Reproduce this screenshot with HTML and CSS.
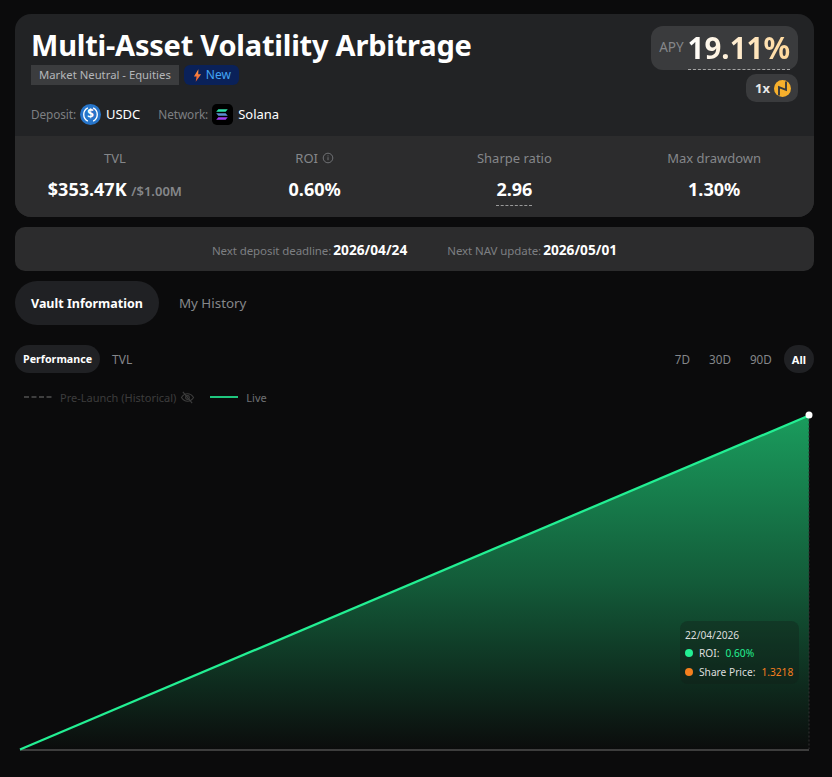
FILE: index.html
```html
<!DOCTYPE html>
<html lang="en">
<head>
<meta charset="utf-8">
<title>Multi-Asset Volatility Arbitrage</title>
<link rel="stylesheet" href="styles.css">
</head>
<body>
<main class="page">
  <section class="card">
    <header class="head">
      <div class="head-left">
        <h1 class="title">Multi-Asset Volatility Arbitrage</h1>
        <div class="tags">
          <span class="tag">Market Neutral - Equities</span>
          <span class="tag-new">
            <svg class="bolt" viewBox="0 0 10 14"><defs><linearGradient id="b" x1="0" y1="0" x2="0" y2="1"><stop offset="0" stop-color="#ff9a4a"/><stop offset="1" stop-color="#f0562a"/></linearGradient></defs><path d="M6 0 1 8h3l-1 6 6-8.500H5.800z" fill="url(#b)"/></svg>
            New
          </span>
        </div>
        <div class="assets">
          <span class="muted">Deposit:</span>
          <svg class="coin" viewBox="0 0 20 20"><circle cx="10" cy="10" r="10" fill="#2775ca"/><path d="M7.500 3.700a7 7 0 0 0 0 12.600M12.500 3.700a7 7 0 0 1 0 12.600" fill="none" stroke="#fff" stroke-width="1.300"/><text x="10" y="13.600" class="coin-text">$</text></svg>
          <span class="asset">USDC</span>
          <span class="muted net">Network:</span>
          <svg class="coin" viewBox="0 0 20 20"><rect width="20" height="20" rx="4.500" fill="#000"/><path d="M6 5h9l-2 2.300H4z" fill="#2fe0a8"/><path d="M4 8.800h9l2 2.300H6z" fill="#5a8fd0"/><path d="M6 12.700h9l-2 2.300H4z" fill="#a040f0"/></svg>
          <span class="asset">Solana</span>
        </div>
      </div>
      <div class="head-right">
        <div class="apy"><span class="apy-label">APY</span><span class="apy-value">19.11%</span></div>
        <div class="lev">1x
          <svg class="lev-icon" viewBox="0 0 16 16"><circle cx="8" cy="8" r="8" fill="#f7b02c"/><path d="M4.700 14.500V6.800L11.300 9.200V1.500" fill="none" stroke="#3a3b3d" stroke-width="1.800"/></svg>
        </div>
      </div>
    </header>
    <div class="stats">
      <div class="stat"><div class="stat-label">TVL</div><div class="stat-value">$353.47K <small class="stat-sub">/$1.00M</small></div></div>
      <div class="stat"><div class="stat-label">ROI <svg class="info" viewBox="0 0 12 12"><circle cx="6" cy="6" r="4.800" fill="none" stroke="currentColor"/><path d="M6 5.200v3M6 3.400v1" stroke="currentColor"/></svg></div><div class="stat-value">0.60%</div></div>
      <div class="stat"><div class="stat-label">Sharpe ratio</div><div class="stat-value"><span class="dashed">2.96</span></div></div>
      <div class="stat"><div class="stat-label">Max drawdown</div><div class="stat-value">1.30%</div></div>
    </div>
  </section>

  <section class="notice">
    <span class="notice-item"><span class="muted">Next deposit deadline:</span> <b>2026/04/24</b></span>
    <span class="notice-item"><span class="muted">Next NAV update:</span> <b>2026/05/01</b></span>
  </section>

  <nav class="tabs">
    <span class="tab active">Vault Information</span>
    <span class="tab">My History</span>
  </nav>

  <div class="controls">
    <div class="seg">
      <span class="seg-item on">Performance</span>
      <span class="seg-item">TVL</span>
    </div>
    <div class="seg ranges">
      <span class="range">7D</span>
      <span class="range">30D</span>
      <span class="range">90D</span>
      <span class="range on">All</span>
    </div>
  </div>

  <div class="legend">
    <span class="legend-item off"><svg class="key" viewBox="0 0 28 2"><path d="M0 1h28" stroke="#3f3f3f" stroke-width="2" stroke-dasharray="5 2.500"/></svg>Pre-Launch (Historical)
      <svg class="eye" viewBox="0 0 16 14"><path d="M1.500 7S4 3 8 3s6.500 4 6.500 4-2.500 4-6.500 4-6.500-4-6.500-4z" fill="none" stroke="#3d3d3d" stroke-width="1.200"/><circle cx="8" cy="7" r="2" fill="none" stroke="#3d3d3d" stroke-width="1.200"/><path d="M3 1l10 12" stroke="#3d3d3d" stroke-width="1.200"/></svg>
    </span>
    <span class="legend-item live"><svg class="key" viewBox="0 0 28 2"><path d="M0 1h28" stroke="#1fc67e" stroke-width="2"/></svg>Live</span>
  </div>

  <div class="chart">
    <svg class="plot" viewBox="0 0 832 371" width="832" height="371">
      <defs>
        <linearGradient id="fill" x1="0" y1="0" x2="0" y2="1">
          <stop offset="0" stop-color="#1a9c5d"/>
          <stop offset="0.5" stop-color="#135b39"/>
          <stop offset="1" stop-color="#0b0c0c"/>
        </linearGradient>
      </defs>
      <path d="M20 343.500 809 9.500V343.500Z" fill="url(#fill)"/>
      <path d="M20 344H809" stroke="#3d3d3d" stroke-width="2"/>
      <path d="M809 9.500V343" stroke="#333" stroke-dasharray="2 2"/>
      <path d="M20 343.500 809 9.500" fill="none" stroke="#23ef93" stroke-width="2.300"/>
      <circle cx="809" cy="9" r="3.500" fill="#fff"/>
    </svg>
    <div class="tooltip">
      <div class="tip-date">22/04/2026</div>
      <div class="tip-row"><i class="dot green"></i><span>ROI:</span><span class="val-green">0.60%</span></div>
      <div class="tip-row"><i class="dot orange"></i><span>Share Price:</span><span class="val-orange">1.3218</span></div>
    </div>
  </div>
</main>
</body>
</html>
```
FILE: styles.css
```css
* { box-sizing: border-box; }
html, body { margin: 0; height: 100%; }
body {
  background: #0b0b0c;
  color: #fff;
  font-family: "Noto Sans", "Open Sans", sans-serif;
  overflow: hidden;
}
.page { padding: 14px 18px 0 15px; width: 832px; height: 777px; overflow: hidden; }

.card { border-radius: 16px; overflow: hidden; background: #222325; }
.head { height: 122px; padding: 11px 16px 0 16px; display: flex; justify-content: space-between; }
.title { margin: 0; font-size: 29px; line-height: 40px; font-weight: 700; letter-spacing: -0.22px; }
.tags { display: flex; gap: 5px; margin-top: 0; }
.tag { height: 20px; padding: 0 8px; background: #3b3c3e; color: #b4b6b9; font-size: 11.3px; line-height: 20px; }
.tag-new { height: 20px; padding: 0 8px 0 9px; background: #0a2159; color: #42a5f5; font-size: 12px; line-height: 20px; border-radius: 6px; display: flex; align-items: center; gap: 4px; }
.bolt { width: 9px; height: 13px; }
.assets { display: flex; align-items: center; margin-top: 19px; height: 20px; font-size: 13px; }
.muted { color: #7d7f82; font-size: 11.8px; letter-spacing: -0.1px; }
.net { margin-left: 18px; }
.coin { width: 21px; height: 21px; margin: 0 5px 0 4px; }
.coin-text { font: 700 11px "Noto Sans", sans-serif; fill: #fff; text-anchor: middle; }
.asset { color: #fff; }

.head-right { display: flex; flex-direction: column; align-items: flex-end; margin-top: 1px; }
.apy { height: 44px; padding: 0 8px; background: #3a3b3d; border-radius: 12px; display: flex; align-items: center; gap: 4px; }
.apy-label { color: #85878a; font-size: 13.5px; margin-top: -2px; }
.apy-value {
  font-size: 29.5px; font-weight: 700; line-height: 42px; height: 43px;
  background: linear-gradient(90deg, #fff, #ffd89a);
  -webkit-background-clip: text; background-clip: text; color: transparent;
  border-bottom: 1px dashed #a5a5a5;
}
.lev { margin-top: 4px; height: 28px; padding: 0 7px 0 9px; border-radius: 10px; background: #3a3b3d; display: flex; align-items: center; gap: 4px; font-size: 13px; font-weight: 700; color: #e8e8e8; }
.lev-icon { width: 17px; height: 17px; }

.stats { height: 81px; background: #2c2c2d; display: grid; grid-template-columns: repeat(4, 1fr); }
.stat { text-align: center; padding-top: 13px; }
.stat-label { color: #85878a; font-size: 13px; line-height: 18px; display: flex; justify-content: center; align-items: center; gap: 4px; }
.info { width: 12px; height: 12px; color: #6f7174; }
.stat-value { font-size: 18px; font-weight: 700; line-height: 24px; margin-top: 10px; }
.stat-sub { font-size: 13px; font-weight: 600; color: #85878a; }
.dashed { display: inline-block; border-bottom: 1px dashed #9a9a9a; height: 29px; }

.notice { margin-top: 10px; height: 44px; background: #2c2c2d; border-radius: 10px; display: flex; justify-content: center; align-items: center; gap: 40px; }
.notice .muted { font-size: 11.5px; letter-spacing: -0.08px; }
.notice-item { display: flex; align-items: baseline; gap: 2px; }
.notice-item b { font-size: 13.7px; font-weight: 700; }

.tabs { margin-top: 10px; display: flex; gap: 4px; }
.tab { height: 44px; padding: 0 16px; border-radius: 22px; font-size: 13.4px; line-height: 44px; color: #85878a; }
.tab.active { background: #202124; color: #fff; font-weight: 700; font-size: 12.5px; line-height: 45px; }

.controls { margin-top: 20px; display: flex; justify-content: space-between; }
.seg { display: flex; align-items: center; gap: 4px; }
.seg-item { height: 28px; padding: 0 8px; border-radius: 14px; font-size: 12px; line-height: 29px; color: #85878a; }
.seg-item.on { background: #202124; color: #fff; font-weight: 700; font-size: 10.7px; }
.ranges { gap: 3px; }
.range { height: 28px; padding: 0 8px; border-radius: 14px; font-size: 11.7px; line-height: 29px; text-align: center; color: #85878a; }
.range.on { background: #202124; color: #fff; font-weight: 700; font-size: 11px; margin-left: 1px; }

.legend { margin-top: 15px; padding-left: 9px; height: 18px; display: flex; align-items: center; gap: 15px; font-size: 11px; }
.legend-item { display: flex; align-items: center; gap: 8px; }
.legend-item.off { color: #3d3d3d; }
.legend-item.live { color: #6f7174; }
.key { width: 28px; height: 2px; }
.eye { width: 15px; height: 13px; margin-left: -4px; }

.chart { position: relative; margin: 0 -18px 0 -15px; height: 371px; }
.plot { display: block; }
.tooltip {
  position: absolute; left: 680px; top: 215px; width: 119px; height: 63px;
  padding: 6px 5px 5px; border-radius: 8px; background: rgba(16, 30, 24, 0.35);
  font-size: 10.2px; color: #ddd;
}
.tip-date { line-height: 16px; }
.tip-row { display: flex; align-items: center; gap: 6px; line-height: 18px; margin-top: 1px; }
.dot { width: 8px; height: 8px; border-radius: 50%; }
.green { background: #23ef93; }
.orange { background: #f57f1e; }
.val-green { color: #23ef93; }
.val-orange { color: #f57f1e; }
```
